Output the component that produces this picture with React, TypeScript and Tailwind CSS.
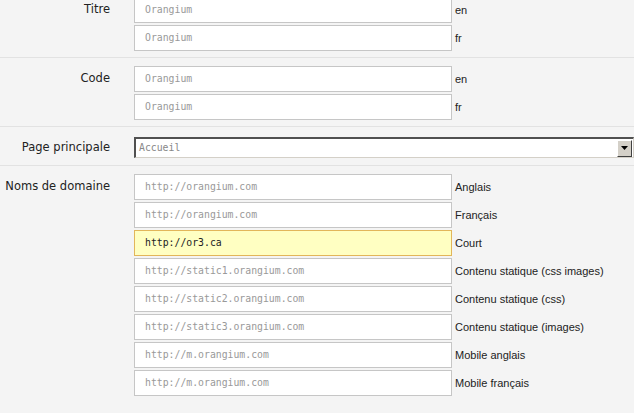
import React from "react";

const inputFont = { fontFamily: '"DejaVu Sans Mono", monospace' };

function Field({ value, label, highlight }: { value: string; label: string; highlight?: boolean }) {
  return (
    <div className="flex items-center h-[26px]">
      <div
        className={
          "w-[318px] h-[26px] border flex items-center pl-[10px] text-[9.8px] " +
          (highlight
            ? "bg-[#ffffc2] border-[#e2b65a] text-[#222]"
            : "bg-white border-[#c6c6c6] text-[#999]")
        }
        style={inputFont}
      >
        {value}
      </div>
      <span className="ml-[3px] text-[11px] text-[#222] font-['Liberation_Sans',Arial,sans-serif]">{label}</span>
    </div>
  );
}

function Label({ text, h = 26 }: { text: string; h?: number }) {
  return (
    <div
      className={
        "w-[110px] shrink-0 text-right text-[11.5px] text-[#222] font-['DejaVu_Sans',Verdana,sans-serif] flex items-center justify-end " +
        (h === 26 ? "h-[26px]" : "h-[21px]")
      }
    >
      {text}
    </div>
  );
}

function Section({ label, rows }: { label: string; rows: [string, string, boolean?][] }) {
  return (
    <div className="flex pt-[8px] pb-[6px] border-b border-[#e2e2e2]">
      <Label text={label} />
      <div className="ml-[24px] flex flex-col gap-[2px]">
        {rows.map(([v, l, h], i) => (
          <Field key={i} value={v} label={l} highlight={h} />
        ))}
      </div>
    </div>
  );
}

export default function App() {
  return (
    <div className="w-[634px] h-[413px] overflow-hidden bg-[#f4f4f4]">
      <div className="-mt-[11px]">
        <Section
          label="Titre"
          rows={[
            ["Orangium", "en"],
            ["Orangium", "fr"],
          ]}
        />
        <Section
          label="Code"
          rows={[
            ["Orangium", "en"],
            ["Orangium", "fr"],
          ]}
        />
        <div className="flex pt-[10px] pb-[7px] border-b border-[#e2e2e2]">
          <Label text="Page principale" h={21} />
          <div className="ml-[24px] flex-1 h-[21px] bg-white border-t-2 border-l-2 border-t-[#505050] border-l-[#505050] border-b border-r border-b-[#d4d0c8] border-r-[#d4d0c8] flex items-center">
            <span className="pl-[3px] flex-1 text-[9.8px] text-[#888]" style={inputFont}>
              Accueil
            </span>
            <div className="w-[15px] h-[17px] mr-[1px] bg-[#d4d0c8] border border-t-white border-l-white border-b-[#404040] border-r-[#404040] flex items-center justify-center">
              <svg width="7" height="4" viewBox="0 0 7 4">
                <path d="M0 0 H7 L3.5 4 Z" fill="#000" />
              </svg>
            </div>
          </div>
        </div>
        <div className="flex pt-[8px] pb-[6px]">
          <Label text="Noms de domaine" />
          <div className="ml-[24px] flex flex-col gap-[2px]">
            <Field value="http://orangium.com" label="Anglais" />
            <Field value="http://orangium.com" label="Français" />
            <Field value="http://or3.ca" label="Court" highlight />
            <Field value="http://static1.orangium.com" label="Contenu statique (css images)" />
            <Field value="http://static2.orangium.com" label="Contenu statique (css)" />
            <Field value="http://static3.orangium.com" label="Contenu statique (images)" />
            <Field value="http://m.orangium.com" label="Mobile anglais" />
            <Field value="http://m.orangium.com" label="Mobile français" />
          </div>
        </div>
      </div>
    </div>
  );
}
